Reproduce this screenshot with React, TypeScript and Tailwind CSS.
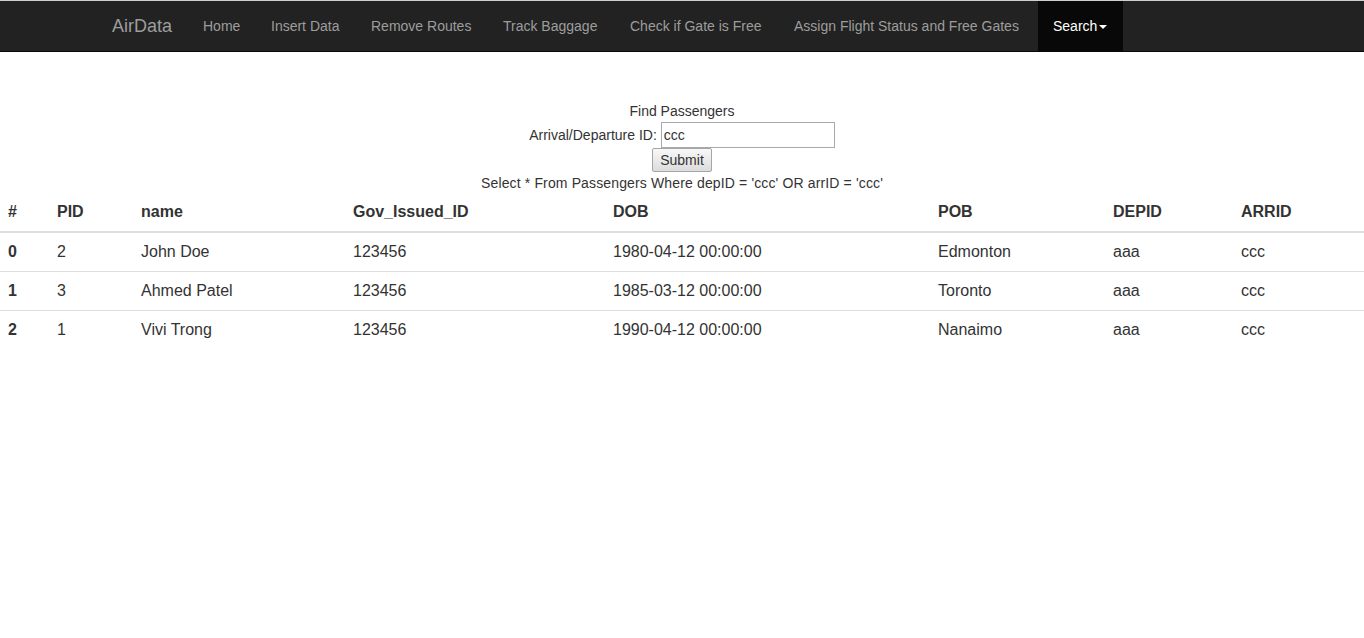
const links = [
  { t: "Home", w: "w-[68px]" },
  { t: "Insert Data", w: "w-[100px]" },
  { t: "Remove Routes", w: "w-[132px]" },
  { t: "Track Baggage", w: "w-[127px]" },
  { t: "Check if Gate is Free", w: "w-[164px]" },
  { t: "Assign Flight Status and Free Gates", w: "w-[259px]" },
];

const cols = [
  { h: "#", w: "w-[49px]" },
  { h: "PID", w: "w-[84px]" },
  { h: "name", w: "w-[212px]" },
  { h: "Gov_Issued_ID", w: "w-[260px]" },
  { h: "DOB", w: "w-[325px]" },
  { h: "POB", w: "w-[175px]" },
  { h: "DEPID", w: "w-[128px]" },
  { h: "ARRID", w: "" },
];

const rows = [
  ["0", "2", "John Doe", "123456", "1980-04-12 00:00:00", "Edmonton", "aaa", "ccc"],
  ["1", "3", "Ahmed Patel", "123456", "1985-03-12 00:00:00", "Toronto", "aaa", "ccc"],
  ["2", "1", "Vivi Trong", "123456", "1990-04-12 00:00:00", "Nanaimo", "aaa", "ccc"],
];

export default function App() {
  return (
    <div className="min-h-screen bg-white text-[14px] leading-[20px] text-[#333] font-['Liberation_Sans',Arial,sans-serif]">
      <div className="h-px bg-[#cfcfcf]" />
      <nav className="bg-[#222] border-b border-[#080808]">
        <div className="w-[1170px] mx-auto flex h-[50px] whitespace-nowrap">
          <div className="w-[91px] px-[15px] text-[18px] leading-[20px] py-[15px] text-[#9d9d9d]">AirData</div>
          {links.map((l) => (
            <div key={l.t} className={`${l.w} px-[15px] py-[15px] text-[#9d9d9d]`}>
              {l.t}
            </div>
          ))}
          <div className="w-[85px] px-[15px] py-[15px] bg-[#080808] text-white flex items-center">
            Search
            <span className="ml-[2px] mt-[1px] w-0 h-0 border-t-4 border-t-white border-x-4 border-x-transparent" />
          </div>
        </div>
      </nav>

      <div className="pt-[49px] flex flex-col items-center">
        <div>Find Passengers</div>
        <div className="flex items-center h-[27px]">
          <span className="mr-1">Arrival/Departure ID:</span>
          <input
            defaultValue="ccc"
            className="w-[174px] h-[26px] border border-[#a9a9a9] px-[2px] text-[14px] outline-none"
          />
        </div>
        <button className="h-[24px] px-[7px] border border-[#a6a6a6] rounded-[2px] bg-gradient-to-b from-[#f8f8f8] to-[#dcdcdc] text-[14px] text-[#333] leading-none">
          Submit
        </button>
        <div className="mt-px tracking-[0.01em]">Select * From Passengers Where depID = 'ccc' OR arrID = 'ccc'</div>
      </div>

      <table className="w-full border-collapse text-[16px] leading-[22px] text-[#333]">
        <thead>
          <tr className="border-b-2 border-[#ddd]">
            {cols.map((c) => (
              <th key={c.h} className={`${c.w} p-2 text-left font-bold`}>
                {c.h}
              </th>
            ))}
          </tr>
        </thead>
        <tbody>
          {rows.map((r, i) => (
            <tr key={i} className={i > 0 ? "border-t border-[#ddd]" : ""}>
              {r.map((v, j) => (
                <td key={j} className={`p-2 ${j === 0 ? "font-bold" : ""}`}>
                  {v}
                </td>
              ))}
            </tr>
          ))}
        </tbody>
      </table>
    </div>
  );
}
